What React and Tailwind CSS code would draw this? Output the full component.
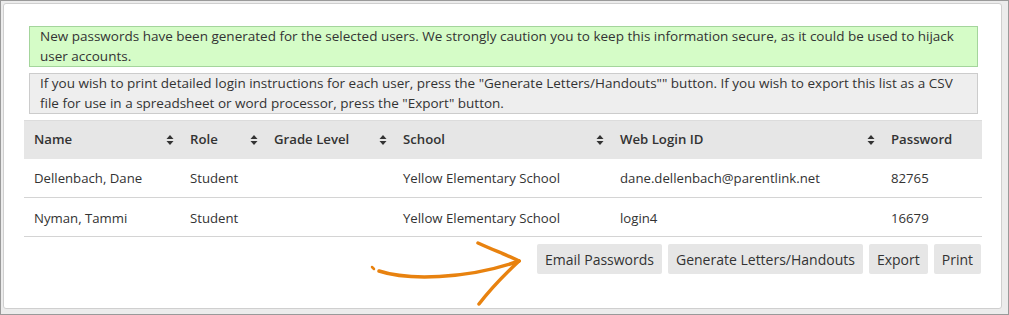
const users = [
  { name: "Dellenbach, Dane", role: "Student", grade: "", school: "Yellow Elementary School", login: "dane.dellenbach@parentlink.net", password: "82765" },
  { name: "Nyman, Tammi", role: "Student", grade: "", school: "Yellow Elementary School", login: "login4", password: "16679" },
];

const columns = [
  { label: "Name", width: 156, sort: true },
  { label: "Role", width: 84, sort: true },
  { label: "Grade Level", width: 129, sort: true },
  { label: "School", width: 217, sort: true },
  { label: "Web Login ID", width: 271, sort: true },
  { label: "Password", width: 101, sort: false },
];

const SortIcon = () => (
  <svg width="8" height="11" viewBox="0 0 8 11" className="absolute right-[6px] top-1/2 -translate-y-1/2">
    <path d="M4 0.5 L7.5 4.5 L0.5 4.5 Z" fill="#333" />
    <path d="M4 10.5 L7.5 6.5 L0.5 6.5 Z" fill="#333" />
  </svg>
);

const Arrow = () => (
  <svg width="170" height="80" viewBox="0 0 170 80" className="absolute left-[360px] top-[235px] pointer-events-none">
    <g fill="none" stroke="#e8820f" strokeLinecap="round" strokeLinejoin="round">
      <path d="M11 31 L13 33" strokeWidth="2.5" />
      <path d="M18 35 C 45 44, 105 44, 158 25" strokeWidth="3.5" />
      <path d="M117 7 C 132 14, 146 19, 158 25" strokeWidth="3.5" />
      <path d="M158 25 C 142 40, 128 55, 118 68" strokeWidth="3.5" />
    </g>
  </svg>
);

export default function App() {
  return (
    <div
      className="relative flex w-[1009px] h-[315px] border border-[#9a9a9a] bg-[#ececec] pl-[2px] pt-[2px] pr-[6px] pb-[5px] text-[#333] text-[13.2px]"
      style={{ fontFamily: '"Open Sans", "Liberation Sans", sans-serif' }}
    >
      <div className="flex-1 flex flex-col border border-[#cfcfcf] rounded-[3px] bg-white pl-[20px] pr-[18px] pt-[22px]">
        <div className="mx-[5px] border border-[#a4d59c] bg-[#d5fcc7] px-[10px] text-[13.5px] leading-[19.5px]">
          New passwords have been generated for the selected users. We strongly caution you to keep this information secure, as it could be used to hijack user accounts.
        </div>
        <div className="mx-[5px] mt-[6px] border border-[#cccccc] bg-[#eeeeee] px-[10px] text-[13.5px] leading-[19.5px]">
          If you wish to print detailed login instructions for each user, press the "Generate Letters/Handouts"" button. If you wish to export this list as a CSV file for use in a spreadsheet or word processor, press the "Export" button.
        </div>

        <table className="mt-[6px] w-[958px] table-fixed border-collapse">
          <colgroup>
            {columns.map((c) => (
              <col key={c.label} style={{ width: c.width }} />
            ))}
          </colgroup>
          <thead>
            <tr className="bg-[#e6e6e6] border-t border-[#dcdcdc]">
              {columns.map((c) => (
                <th key={c.label} className="relative h-[38px] pl-[10px] pt-[1px] text-left font-semibold">
                  {c.label}
                  {c.sort && <SortIcon />}
                </th>
              ))}
            </tr>
          </thead>
          <tbody>
            {users.map((u) => (
              <tr key={u.name} className="border-b border-[#d4d4d4]">
                <td className="h-[39px] pl-[10px] pt-[3px]">{u.name}</td>
                <td className="pl-[10px] pt-[3px]">{u.role}</td>
                <td className="pl-[10px] pt-[3px]">{u.grade}</td>
                <td className="pl-[10px] pt-[3px]">{u.school}</td>
                <td className="pl-[10px] pt-[3px]">{u.login}</td>
                <td className="pl-[10px] pt-[3px]">{u.password}</td>
              </tr>
            ))}
          </tbody>
        </table>

        <div className="mt-[7px] flex justify-end gap-[6px] w-[958px] pr-[1px]">
          {["Email Passwords", "Generate Letters/Handouts", "Export", "Print"].map((b) => (
            <button key={b} className="h-[30px] px-[8px] bg-[#e6e6e6] rounded-[2px] text-[14px] text-[#333]">
              {b}
            </button>
          ))}
        </div>
      </div>
      <Arrow />
    </div>
  );
}
